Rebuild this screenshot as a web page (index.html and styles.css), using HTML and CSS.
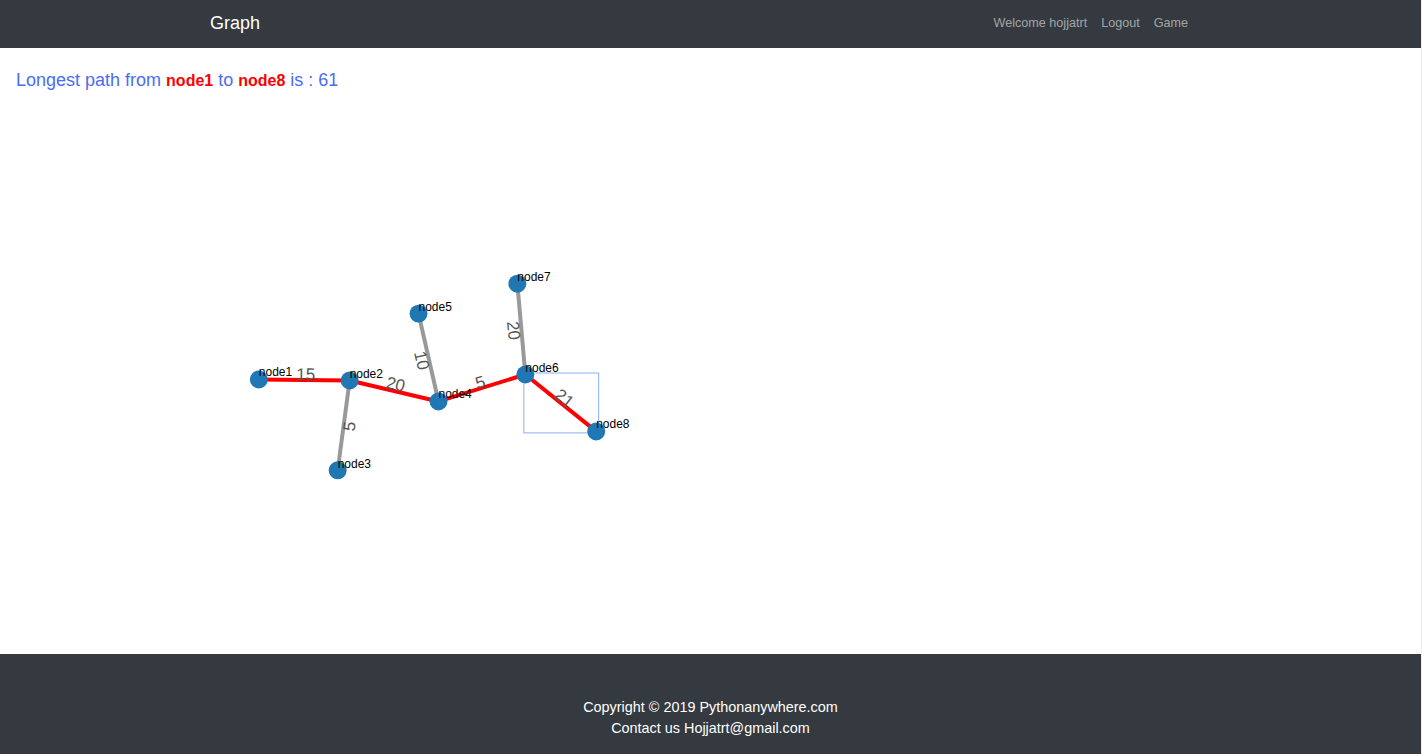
FILE: index.html
```html
<!DOCTYPE html>
<html lang="en">
<head>
<meta charset="utf-8">
<title>Graph</title>
<link rel="stylesheet" href="styles.css">
</head>
<body>
<header class="navbar">
  <a class="brand" href="#">Graph</a>
  <nav class="nav">
    <a class="nav-link" href="#">Welcome hojjatrt</a>
    <a class="nav-link" href="#">Logout</a>
    <a class="nav-link" href="#">Game</a>
  </nav>
</header>
<main class="main">
  <h5 class="title">Longest path from <b class="hl">node1</b> to <b class="hl">node8</b> is : 61</h5>
  <svg class="graph" width="1421" height="554" viewBox="0 100 1421 554">
    <rect class="sel" x="523.5" y="372.5" width="75" height="60"/>
    <g class="edges">
      <line class="edge red" x1="258" y1="379" x2="349" y2="380"/>
      <line class="edge red" x1="349" y1="380" x2="438" y2="401"/>
      <line class="edge gray" x1="349" y1="380" x2="337" y2="470"/>
      <line class="edge gray" x1="438" y1="401" x2="418" y2="313"/>
      <line class="edge red" x1="438" y1="401" x2="525" y2="374"/>
      <line class="edge gray" x1="525" y1="374" x2="517" y2="283"/>
      <line class="edge red" x1="525" y1="374" x2="596" y2="431"/>
    </g>
    <g class="wlabels">
      <text transform="translate(305,374) rotate(0.6)">15</text>
      <text transform="translate(395,384) rotate(13.3)">20</text>
      <text transform="translate(349,426) rotate(-82.4)">5</text>
      <text transform="translate(421,360) rotate(77.2)">10</text>
      <text transform="translate(480,382) rotate(-17.2)">5</text>
      <text transform="translate(513,330) rotate(85)">20</text>
      <text transform="translate(564,398) rotate(38.8)">21</text>
    </g>
    <g class="nodes">
      <circle cx="258" cy="379" r="9"/>
      <circle cx="349" cy="380" r="9"/>
      <circle cx="337" cy="470" r="9"/>
      <circle cx="438" cy="401" r="9"/>
      <circle cx="418" cy="313" r="9"/>
      <circle cx="525" cy="374" r="9"/>
      <circle cx="517" cy="283" r="9"/>
      <circle cx="596" cy="431" r="9"/>
    </g>
    <g class="nlabels">
      <text x="258" y="376">node1</text>
      <text x="349" y="378">node2</text>
      <text x="337" y="468">node3</text>
      <text x="438" y="398">node4</text>
      <text x="418" y="310">node5</text>
      <text x="525" y="371">node6</text>
      <text x="517" y="280">node7</text>
      <text x="596" y="428">node8</text>
    </g>
  </svg>
</main>
<footer class="footer">
  <p class="foot-line">Copyright © 2019 Pythonanywhere.com</p>
  <p class="foot-line">Contact us Hojjatrt@gmail.com</p>
</footer>
</body>
</html>
```
FILE: styles.css
```css
html {
  background: #ececec;
}
body {
  margin: 0;
  width: 1421px;
  background: #fff;
  font-family: "Liberation Sans", Arial, sans-serif;
}
.navbar {
  height: 48px;
  background: #343a40;
  display: flex;
  align-items: center;
  justify-content: space-between;
  padding: 0 226px 2px 210px;
  box-sizing: border-box;
}
.brand {
  color: #fff;
  font-size: 18px;
  text-decoration: none;
}
.nav {
  display: flex;
}
.nav-link {
  color: rgba(255, 255, 255, 0.55);
  font-size: 12.6px;
  text-decoration: none;
  padding: 0 7px;
}
.main {
  height: 606px;
  display: flex;
  flex-direction: column;
}
.title {
  margin: 0;
  padding: 20px 16px 8px;
  font-size: 18px;
  line-height: 24px;
  font-weight: normal;
  color: #4a6cf4;
}
.hl {
  color: #ff0000;
  font-weight: bold;
  font-size: 16px;
}
.graph {
  display: block;
}
.sel {
  fill: none;
  stroke: #8ab0f5;
  stroke-width: 1;
}
.edge {
  stroke-width: 4;
}
.edge.red {
  stroke: #ff0000;
}
.edge.gray {
  stroke: #999;
}
.wlabels text {
  font-family: "Liberation Sans", Arial, sans-serif;
  font-size: 17px;
  fill: #555;
  text-anchor: middle;
  dominant-baseline: central;
}
.nodes circle {
  fill: #1f77b4;
}
.nlabels text {
  font-family: "Liberation Sans", Arial, sans-serif;
  font-size: 12px;
  fill: #000;
}
.footer {
  height: 100px;
  box-sizing: border-box;
  background: #343a40;
  color: #fff;
  text-align: center;
  padding-top: 43px;
}
.foot-line {
  margin: 0;
  font-size: 14.4px;
  line-height: 21px;
}
```
